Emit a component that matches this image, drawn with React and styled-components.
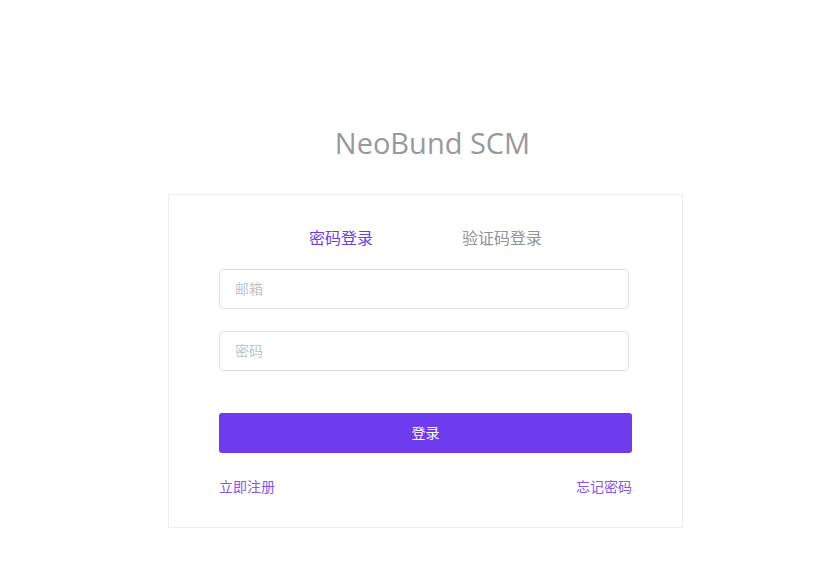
import React from "react";
import styled, { createGlobalStyle } from "styled-components";

const Global = createGlobalStyle`
  html, body { margin: 0; padding: 0; background: #ffffff; }
  body { font-family: "Noto Sans CJK SC", "Noto Sans", sans-serif; }
  * { box-sizing: border-box; }
`;

const Page = styled.div`
  display: flex;
  flex-direction: column;
  padding: 123px 0 0 168px;
`;

const Title = styled.h1`
  margin: 0 0 31px;
  width: 515px;
  padding-left: 14px;
  text-align: center;
  font-family: "Open Sans", "Noto Sans", sans-serif;
  font-weight: 400;
  font-size: 29px;
  line-height: 40px;
  color: #999999;
`;

const Card = styled.div`
  width: 515px;
  border: 1px solid #ebeef5;
  padding: 32px 50px 31px;
  display: flex;
  flex-direction: column;
`;

const Tabs = styled.div`
  display: flex;
  justify-content: center;
  gap: 89px;
  margin-bottom: 22px;
`;

const Tab = styled.div`
  font-size: 16px;
  line-height: 20px;
  color: ${(p) => (p.$active ? "#6f3bef" : "#909399")};
  cursor: pointer;
`;

const Input = styled.input`
  width: 410px;
  height: 40px;
  border: 1px solid #dcdfe6;
  border-radius: 4px;
  padding: 0 15px 2px;
  font-family: "Noto Sans CJK SC", sans-serif;
  font-size: 14px;
  color: #606266;
  outline: none;
  margin-bottom: ${(p) => p.$gap}px;
  &::placeholder { color: #c0c4cc; }
`;

const Button = styled.button`
  width: 413px;
  height: 40px;
  border: none;
  border-radius: 3px;
  background: #6f3bef;
  color: #ffffff;
  font-family: "Noto Sans CJK SC", sans-serif;
  font-size: 14px;
  padding: 0 0 2px;
  cursor: pointer;
  margin-bottom: 23px;
`;

const Links = styled.div`
  width: 413px;
  display: flex;
  justify-content: space-between;
`;

const Link = styled.a`
  font-size: 14px;
  line-height: 20px;
  color: #8355f3;
  text-decoration: none;
  cursor: pointer;
`;

export default function App() {
  return (
    <>
      <Global />
      <Page>
        <Title>NeoBund SCM</Title>
        <Card>
          <Tabs>
            <Tab $active>密码登录</Tab>
            <Tab>验证码登录</Tab>
          </Tabs>
          <Input $gap={22} placeholder="邮箱" />
          <Input $gap={42} type="password" placeholder="密码" />
          <Button>登录</Button>
          <Links>
            <Link>立即注册</Link>
            <Link>忘记密码</Link>
          </Links>
        </Card>
      </Page>
    </>
  );
}
